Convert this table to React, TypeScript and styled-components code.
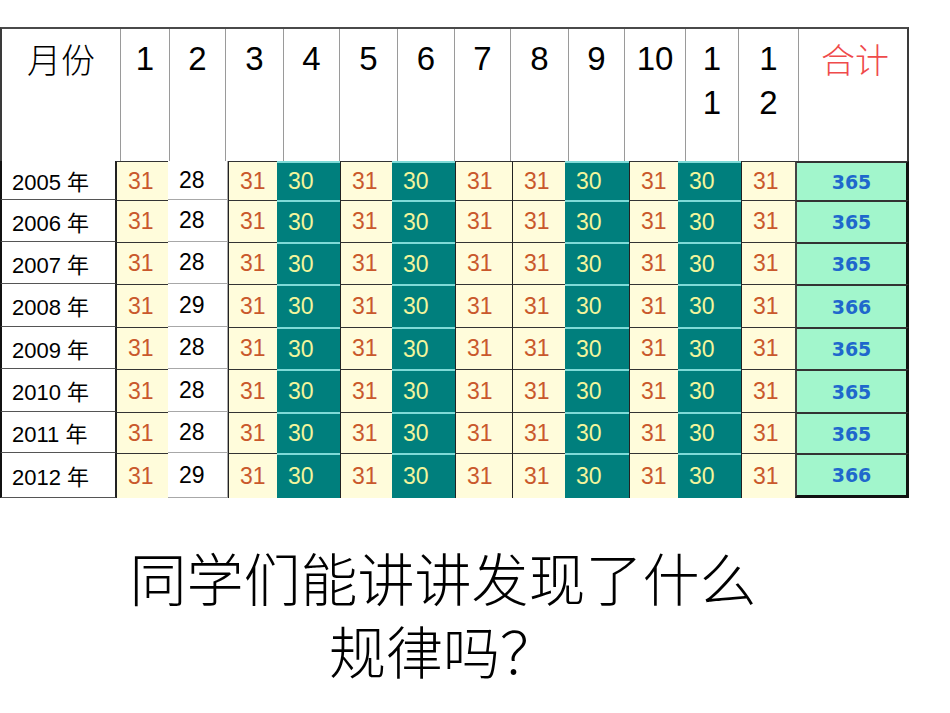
import { ReactElement } from "react";
import styled, { createGlobalStyle, css } from "styled-components";

const GlobalStyle = createGlobalStyle`
  html, body {
    margin: 0;
    padding: 0;
    background: #ffffff;
  }
  body {
    font-family: "Liberation Sans", "Noto Sans CJK SC", sans-serif;
    color: #000;
  }
`;

const Page = styled.div`
  width: 950px;
  height: 713px;
  padding-top: 27px;
  box-sizing: border-box;
  overflow: hidden;
`;

const Table = styled.div`
  width: 909px;
`;

const HeadRow = styled.div`
  display: grid;
  grid-template-columns: 119px 49px 56px 58px 56px 58px 57px 56px 58px 56px 61px 53px 60px 112px;
  height: 134px;
  border-top: 2px solid #4a4a4a;
  border-left: 2px solid #3a3a3a;
  border-right: 2px solid #3a3a3a;
  box-sizing: border-box;
`;

const HeadCell = styled.div<{ $red?: boolean; $cjk?: boolean }>`
  border-right: 1px solid #9a9a9a;
  padding-top: 8px;
  text-align: center;
  font-size: 33px;
  line-height: 44px;
  white-space: pre-line;
  color: ${(p) => (p.$red ? "#ef4b4b" : "#000")};
  ${(p) =>
    p.$cjk &&
    css`
      font-family: "Noto Sans CJK SC", sans-serif;
      font-weight: 300;
      font-size: 34px;
    `}
  &:last-child {
    border-right: none;
  }
`;

const Body = styled.div`
  display: grid;
  grid-template-columns: 116px 52px 60px 49px 63px 52px 63px 57px 53px 64px 49px 63px 54px 114px;
  grid-template-rows: 39px 42px 42px 43px 42px 43px 41px 45px;
`;

type Kind = "label" | "plain" | "cream" | "teal" | "total";

const kinds = {
  label: css`
    background: #fff;
    color: #000;
    font-size: 22px;
    padding-left: 10px;
    border-left: 2px solid #111;
    border-right: 1px solid #222;
    border-bottom: 1px solid #555;
  `,
  plain: css`
    background: #fff;
    color: #000;
    border-right: 1px solid #a8a8a8;
    border-bottom: 1px solid #a8a8a8;
  `,
  cream: css`
    background: #fffcdb;
    color: #c9582c;
    border-left: 1px solid #222;
    border-top: 1px solid #333;
  `,
  teal: css`
    background: #007f7d;
    color: #f3f59c;
    border-top: 2px solid #7fdbd8;
  `,
  total: css`
    background: #a2f6cc;
    color: #1f68cc;
    font-family: "DejaVu Sans", sans-serif;
    font-weight: bold;
    font-size: 19px;
    justify-content: center;
    padding-left: 0;
    border-top: 2px solid #333;
    border-left: 2px solid #444;
    border-right: 3px solid #111;
  `,
};

const Cell = styled.div<{ $kind: Kind; $last?: boolean }>`
  display: flex;
  align-items: center;
  box-sizing: border-box;
  padding-left: 11px;
  font-size: 23px;
  white-space: nowrap;
  ${(p) => kinds[p.$kind]}
  ${(p) =>
    p.$last &&
    p.$kind === "total" &&
    css`
      border-bottom: 3px solid #111;
    `}
`;

// Latin primary font keeps the line boxes compact; the hanzi fall back to Noto CJK
const Caption = styled.div`
  margin-top: 47px;
  margin-left: 123px;
  width: 640px;
  display: flex;
  flex-direction: column;
  align-items: center;
  font-family: "Liberation Sans", "Noto Sans CJK SC", sans-serif;
  font-weight: 300;
  font-size: 57px;
`;

const CaptionLine = styled.div`
  height: 73px;
  line-height: 73px;
  white-space: nowrap;
`;

const headers = ["月份", "1", "2", "3", "4", "5", "6", "7", "8", "9", "10", "1\n1", "1\n2", "合计"];

const colKinds: Kind[] = [
  "cream", "plain", "cream", "teal", "cream", "teal", "cream",
  "cream", "teal", "cream", "teal", "cream",
];

const years = [
  { year: 2005, feb: 28 },
  { year: 2006, feb: 28 },
  { year: 2007, feb: 28 },
  { year: 2008, feb: 29 },
  { year: 2009, feb: 28 },
  { year: 2010, feb: 28 },
  { year: 2011, feb: 28 },
  { year: 2012, feb: 29 },
];

const days = (month: number, feb: number) =>
  month === 2 ? feb : [4, 6, 9, 11].includes(month) ? 30 : 31;

export default function App(): ReactElement {
  return (
    <>
      <GlobalStyle />
      <Page>
        <Table>
          <HeadRow>
            {headers.map((h, i) => (
              <HeadCell key={i} $cjk={i === 0 || i === 13} $red={i === 13}>
                {h}
              </HeadCell>
            ))}
          </HeadRow>
          <Body>
            {years.map((y, r) => {
              const last = r === years.length - 1;
              const months = colKinds.map((k, m) => days(m + 1, y.feb));
              const total = months.reduce((a, b) => a + b, 0);
              return [
                <Cell key={`l${r}`} $kind="label">
                  {y.year} 年
                </Cell>,
                ...colKinds.map((k, m) => (
                  <Cell key={`c${r}-${m}`} $kind={k}>
                    {months[m]}
                  </Cell>
                )),
                <Cell key={`t${r}`} $kind="total" $last={last}>
                  {total}
                </Cell>,
              ];
            })}
          </Body>
        </Table>
        <Caption>
          <CaptionLine>同学们能讲讲发现了什么</CaptionLine>
          <CaptionLine>规律吗？</CaptionLine>
        </Caption>
      </Page>
    </>
  );
}
